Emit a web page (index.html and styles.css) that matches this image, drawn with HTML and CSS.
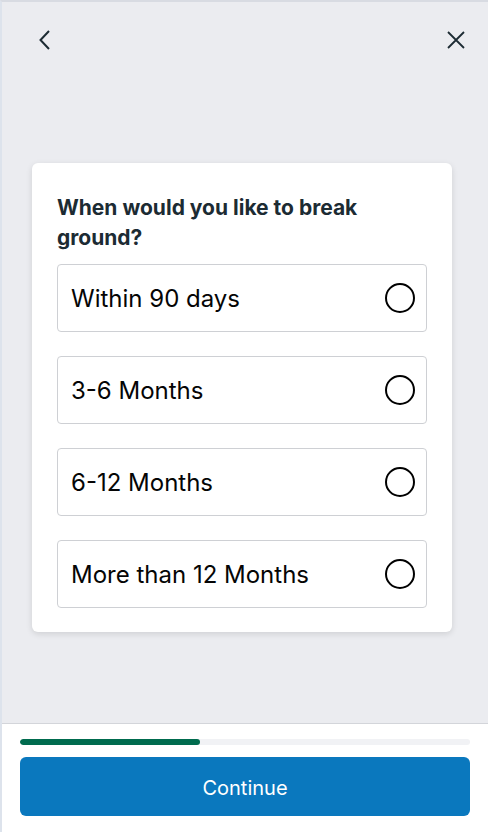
FILE: index.html
```html
<!DOCTYPE html>
<html lang="en">
<head>
    <meta charset="UTF-8">
    <meta name="viewport" content="width=device-width, initial-scale=1.0">
    <title>Break ground</title>
    <link rel="stylesheet" href="styles.css">
</head>
<body>
    <div class="screen">
        <div class="top-bar">
            <button class="icon-btn" aria-label="Back">
                <svg width="20" height="20" viewBox="0 0 20 20"><path d="M14 1 L5.5 10 L14 19" fill="none" stroke="#1c2b33" stroke-width="2"/></svg>
            </button>
            <button class="icon-btn" aria-label="Close">
                <svg width="20" height="20" viewBox="0 0 20 20"><path d="M2 2 L18 18 M18 2 L2 18" fill="none" stroke="#1c2b33" stroke-width="1.8"/></svg>
            </button>
        </div>

        <div class="content">
            <div class="card">
                <h2 class="question">When would you like to break ground?</h2>
                <div class="options">
                    <label class="option"><span>Within 90 days</span><span class="radio"></span></label>
                    <label class="option"><span>3-6 Months</span><span class="radio"></span></label>
                    <label class="option"><span>6-12 Months</span><span class="radio"></span></label>
                    <label class="option"><span>More than 12 Months</span><span class="radio"></span></label>
                </div>
            </div>
        </div>

        <div class="footer">
            <div class="progress"><div class="progress-fill" style="width: 40%"></div></div>
            <button class="continue-btn">Continue</button>
        </div>
    </div>
</body>
</html>
```

FILE: styles.css
```css
* {
    box-sizing: border-box;
}

body {
    margin: 0;
    background: #ffffff;
    font-family: 'Inter', 'Roboto', sans-serif;
    color: #1c1e21;
}

.screen {
    width: 488px;
    height: 832px;
    display: flex;
    flex-direction: column;
    border-left: 2px solid #dde3ec;
    border-top: 2px solid #d8dbe2;
    background: #ebecf0;
}

.top-bar {
    display: flex;
    justify-content: space-between;
    align-items: center;
    padding: 18px 16px 0 27px;
    height: 58px;
}

.icon-btn {
    background: none;
    border: none;
    padding: 0;
    width: 32px;
    height: 32px;
    display: flex;
    align-items: center;
    justify-content: center;
    cursor: pointer;
}

.content {
    flex: 1;
    display: flex;
    flex-direction: column;
    padding: 103px 36px 0 30px;
}

.card {
    background: #ffffff;
    border-radius: 6px;
    box-shadow: 0 2px 6px rgba(0, 0, 0, 0.12);
    padding: 30px 25px 24px 25px;
}

.question {
    margin: 0 0 11px 0;
    font-size: 21px;
    line-height: 30px;
    font-weight: 700;
    color: #1c2b33;
    max-width: 330px;
}

.options {
    display: flex;
    flex-direction: column;
    gap: 24px;
}

.option {
    display: flex;
    justify-content: space-between;
    align-items: center;
    height: 68px;
    padding: 0 11px 0 13px;
    border: 1px solid #ced0d4;
    border-radius: 4px;
    font-size: 24px;
    color: #050505;
    cursor: pointer;
}

.radio {
    width: 30px;
    height: 30px;
    border: 2.5px solid #000000;
    border-radius: 50%;
}

.footer {
    background: #ffffff;
    border-top: 1px solid #d3d5da;
    padding: 15px 18px 16px 18px;
    display: flex;
    flex-direction: column;
    gap: 12px;
}

.progress {
    height: 6px;
    background: #f1f2f5;
    border-radius: 3px;
    overflow: hidden;
}

.progress-fill {
    height: 100%;
    background: #006b4e;
    border-radius: 3px;
}

.continue-btn {
    height: 59px;
    border: none;
    border-radius: 6px;
    background: #0a78be;
    color: #ffffff;
    font-family: 'Inter', 'Roboto', sans-serif;
    font-size: 20px;
    padding-top: 3px;
    cursor: pointer;
}
```
